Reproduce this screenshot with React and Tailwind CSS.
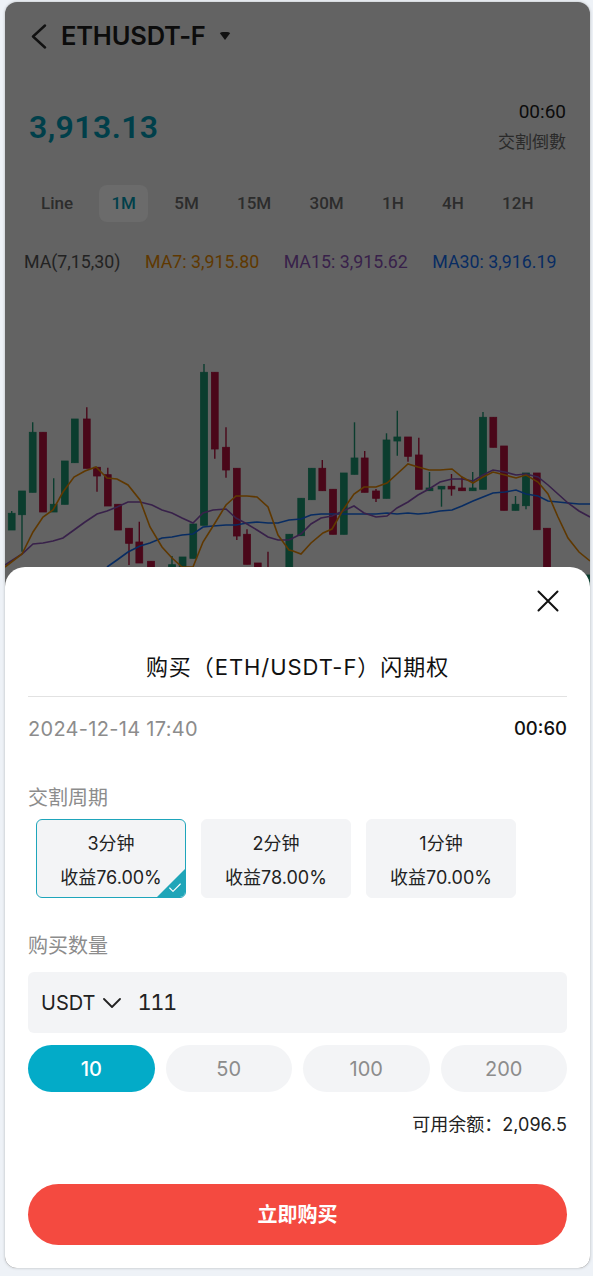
import React from 'react';
import { Check } from 'lucide-react';

const GREEN = '#0b3d2e';
const RED = '#4a0719';

// [center x, body top, body bottom, wick top, wick bottom, up?]
const candles = [
  [11.7, 513.3, 530, 511, 530, 1], [22, 491, 514.7, 491, 551.7, 1], [32.7, 432.3, 492.3, 422.3, 492.3, 1],
  [43, 432.3, 512, 432.3, 512, 0], [53.7, 504.3, 512, 478.3, 512, 1], [64.8, 461, 504.3, 461, 504.3, 1],
  [74.8, 419, 462.7, 419, 462.7, 1], [86.8, 419, 468.3, 407.3, 468.3, 0], [97, 467.3, 476, 467.3, 491.7, 0],
  [107.8, 474.7, 506, 467.7, 506, 0], [118, 504.3, 530, 504.3, 530, 0], [129, 528.3, 543.3, 528.3, 565, 0],
  [139.3, 542, 563, 521.7, 563, 0], [151, 561.3, 575, 561.3, 575, 0], [172, 564.7, 575, 556, 575, 1],
  [182.6, 557, 570, 557, 570, 1], [193.3, 524, 558.3, 524, 558.3, 1], [204, 372.3, 525.3, 364, 525.3, 1],
  [214.8, 372.3, 449, 372.3, 458.7, 0], [226, 447.3, 470, 427.3, 477.7, 0], [236.8, 468.3, 536, 468.3, 540, 0],
  [247, 534.3, 564.3, 529.3, 564.3, 0], [257.8, 563, 580, 563, 580, 0], [268, 575, 580, 551.7, 580, 0],
  [289.3, 534.3, 580, 534.3, 580, 1], [301.2, 498.3, 535.7, 498.3, 535.7, 1], [311.8, 468.3, 499.7, 468.3, 499.7, 1],
  [322.3, 468.3, 490.7, 460, 490.7, 0], [333, 489.3, 534.3, 489.3, 534.3, 0], [343.8, 473, 534.3, 473, 534.3, 1],
  [354.5, 458, 474.3, 422.3, 474.3, 1], [364.7, 458, 492.3, 451, 492.3, 0], [376, 491, 498.3, 489, 502, 0],
  [386.5, 440, 498.3, 433.3, 498.3, 1], [397.3, 437, 441, 410.7, 455.7, 1], [408, 437, 456.3, 437, 461.7, 0],
  [418.8, 455, 489.3, 437.7, 489.3, 0], [429.5, 488, 490.7, 472, 490.7, 1], [441.5, 486.3, 489, 486.3, 506.7, 1],
  [451.5, 486.3, 489, 474, 495.7, 0], [462, 488, 490.7, 476.7, 490.7, 0], [472.7, 488, 490.7, 472, 490.7, 1],
  [483, 417.3, 489.3, 412, 489.3, 1], [493.3, 417.3, 447.3, 417.3, 447.3, 0], [504, 446, 510.3, 446, 510.3, 0],
  [515.5, 504.3, 510.3, 496, 510.3, 1], [526, 473, 505.7, 473, 509.3, 1], [536.8, 473, 529.7, 473, 529.7, 0],
  [547, 528.3, 580, 528.3, 580, 0], [589, 575, 585, 575, 585, 1],
];

const ma7 = [[5,567],[22,554],[33,532],[43,517],[53,510],[63,492],[74,477],[85,471],[96,467],[107,478],[117,479],[128,485],[140,500],[150,527],[162,547],[172,558],[182,567],[193,567],[203,542],[215,523],[226,505],[236,496],[247,496],[257,497],[268,507],[278,535],[289,550],[293,551],[301,554],[311,543],[323,533],[332,529],[343,510],[354,494],[364,487],[376,487],[387,483],[397,474],[408,464],[418,467],[429,470],[440,470],[452,469],[462,477],[473,483],[483,477],[493,472],[505,475],[516,478],[526,475],[538,482],[548,494],[558,517],[568,538],[579,552],[590,561]];
const ma15 = [[5,565],[22,554],[33,544],[43,543],[53,541],[63,538],[74,530],[85,522],[97,514],[107,511],[117,507],[128,502],[140,502],[152,505],[162,510],[172,513],[182,518],[193,523],[203,513],[213,510],[226,509],[236,518],[247,524],[257,530],[268,537],[278,540],[289,540],[301,534],[311,524],[321,518],[332,516],[343,511],[354,506],[364,513],[376,517],[387,516],[397,508],[408,502],[418,495],[429,489],[440,482],[452,479],[462,479],[473,481],[483,475],[493,470],[505,472],[516,475],[526,474],[538,477],[548,485],[558,494],[568,503],[579,511],[590,517]];
const ma30 = [[107,567],[117,560],[128,552],[140,546],[150,543],[162,538],[172,537],[182,535],[193,534],[203,527],[213,526],[226,525],[236,525],[247,523],[257,522],[268,523],[278,523],[289,520],[301,519],[311,515],[321,514],[343,514],[364,514],[376,514],[387,513],[397,514],[408,513],[418,514],[429,513],[440,511],[452,510],[462,506],[473,501],[483,497],[493,493],[505,492],[516,490],[526,494],[538,496],[548,501],[558,502],[568,503],[579,504],[590,504]];

const toPoints = (list) => list.map((p) => p.join(',')).join(' ');

function KlineChart() {
  return (
    <svg className="mt-[26px] block w-full h-[290px]" viewBox="5 300 585 290">
      {candles.map(([x, top, bottom, wickTop, wickBottom, up]) => (
        <g key={x} fill={up ? GREEN : RED} stroke={up ? GREEN : RED}>
          <line x1={x} x2={x} y1={wickTop} y2={wickBottom} strokeWidth="1.4" />
          <rect x={x - 3.4} y={top} width="6.8" height={bottom - top} strokeWidth="0.8" />
        </g>
      ))}
      <polyline points={toPoints(ma30)} fill="none" stroke="#082c62" strokeWidth="1.6" />
      <polyline points={toPoints(ma15)} fill="none" stroke="#38214a" strokeWidth="1.6" />
      <polyline points={toPoints(ma7)} fill="none" stroke="#5f3800" strokeWidth="1.6" />
    </svg>
  );
}

const tabs = ['Line', '1M', '5M', '15M', '30M', '1H', '4H', '12H'];
const periods = [
  { time: '3分钟', rate: '收益76.00%', active: true },
  { time: '2分钟', rate: '收益78.00%' },
  { time: '1分钟', rate: '收益70.00%' },
];
const amounts = ['10', '50', '100', '200'];

export default function App() {
  return (
    <div className="w-[593px] h-[1276px] pt-[2px] pl-[5px] bg-[#eef2f7] font-['Inter','Noto_Sans_CJK_SC',sans-serif]">
      <div className="relative w-[585px] h-[1266px] rounded-xl overflow-hidden bg-[#636363] shadow-[0_0_3px_rgba(0,0,0,0.25)]">
        <div className="h-[68px] flex items-center pl-[26px]">
          <svg width="16" height="25" viewBox="0 0 16 25" fill="none" stroke="#111" strokeWidth="2.4" strokeLinecap="round" strokeLinejoin="round">
            <path d="M14 1.5 L2 12.5 L14 23.5" />
          </svg>
          <span className="ml-[14px] text-[25.5px] leading-none font-semibold tracking-[-0.2px] text-[#0c0c0c]">ETHUSDT-F</span>
          <span className="ml-[13px] w-0 h-0 border-x-[6px] border-x-transparent border-t-[8px] border-t-[#111] rounded-sm" />
        </div>

        <div className="mt-[27px] h-[60px] flex items-center justify-between px-[24px] font-['Roboto','Noto_Sans_CJK_SC',sans-serif]">
          <span className="text-[32px] font-semibold tracking-[0.4px] text-[#003f4a]">3,913.13</span>
          <div className="text-right">
            <div className="text-[19px] leading-[30px] text-[#0c0c0c]">00:60</div>
            <div className="text-[17px] leading-[30px] text-[#2a2a2a]">交割倒數</div>
          </div>
        </div>

        <div className="mt-[28px] pl-[24px] flex gap-[14.3px] font-['Roboto',sans-serif]">
          {tabs.map((tab) => (
            <span
              key={tab}
              className={`h-[37px] px-3 rounded-lg flex items-center text-[17px] font-medium ${tab === '1M' ? 'bg-[#6b6b6b] text-[#003f4a]' : 'text-[#2c2c2c]'}`}
            >
              {tab}
            </span>
          ))}
        </div>

        <div className="mt-[28px] h-6 pl-[19px] flex items-center gap-[24.5px] text-[17.8px] whitespace-nowrap font-['Roboto',sans-serif]">
          <span className="text-[#222]">MA(7,15,30)</span>
          <span className="text-[#5f3800]">MA7: 3,915.80</span>
          <span className="text-[#38214a]">MA15: 3,915.62</span>
          <span className="text-[#082c62]">MA30: 3,916.19</span>
        </div>

        <KlineChart />

        {/* Purchase sheet */}
        <div className="absolute inset-x-0 bottom-0 h-[701px] bg-white rounded-t-[20px] px-[23px]">
          <div className="h-[68px] flex justify-end items-center pr-[8px]">
            <svg width="22" height="22" viewBox="0 0 22 22" fill="none" stroke="#111" strokeWidth="2" strokeLinecap="round">
              <path d="M1.5 1.5 L20.5 20.5 M20.5 1.5 L1.5 20.5" />
            </svg>
          </div>
          <h2 className="mt-[14px] text-center text-[22px] leading-[36px] font-normal tracking-[0.95px] text-[#111]">购买（ETH/USDT-F）闪期权</h2>
          <div className="mt-[11px] h-px bg-[#e2e2e2]" />

          <div className="mt-[19px] flex justify-between items-center h-[26px] text-[20px]">
            <span className="tracking-[0.3px] text-[#8c8c8c]">2024-12-14 17:40</span>
            <span className="text-[18.5px] font-medium text-[#111]">00:60</span>
          </div>

          <div className="mt-[42px] text-[20px] leading-[28px] text-[#8c8c8c]">交割周期</div>
          <div className="mt-[7px] ml-[8px] flex gap-[15px]">
            {periods.map((p) => (
              <div
                key={p.time}
                className={`relative w-[150px] h-[79px] rounded-md bg-[#f3f4f6] overflow-hidden flex flex-col items-center pt-[8px] text-[18px] text-[#222] border ${p.active ? 'border-[#1ea5bb]' : 'border-[#f3f4f6]'}`}
              >
                <span className="leading-[32px]">{p.time}</span>
                <span className="leading-[35px]">{p.rate}</span>
                {p.active && (
                  <>
                    <span className="absolute right-0 bottom-0 w-0 h-0 border-l-[28px] border-l-transparent border-b-[28px] border-b-[#1fa5b8]" />
                    <Check size={16} strokeWidth={1.6} className="absolute right-[2px] bottom-[1px] text-white" />
                  </>
                )}
              </div>
            ))}
          </div>

          <div className="mt-[34px] text-[20px] leading-[28px] text-[#8c8c8c]">购买数量</div>
          <div className="mt-[12px] h-[61px] rounded-md bg-[#f3f4f6] flex items-center pl-[13px] text-[#222]">
            <span className="text-[20px]">USDT</span>
            <svg className="ml-[8px]" width="18" height="10" viewBox="0 0 18 10" fill="none" stroke="#222" strokeWidth="1.8" strokeLinecap="round" strokeLinejoin="round">
              <path d="M1 1 L9 9 L17 1" />
            </svg>
            <span className="ml-[16px] text-[22px] tabular-nums tracking-[-1.5px]">111</span>
          </div>

          <div className="mt-[12px] grid grid-cols-4 gap-[11px]">
            {amounts.map((a) => (
              <span
                key={a}
                className={`h-[47px] rounded-full flex items-center justify-center text-[20px] ${a === '10' ? 'bg-[#03abc8] text-white font-medium' : 'bg-[#f3f4f6] text-[#8c8c8c]'}`}
              >
                {a}
              </span>
            ))}
          </div>

          <div className="mt-[20px] text-right text-[18px] leading-[26px] text-[#222]">可用余额：2,096.5</div>

          <button className="mt-[46px] w-full h-[61px] rounded-full bg-[#f44a40] text-white text-[20px] font-semibold">立即购买</button>
        </div>
      </div>
    </div>
  );
}
